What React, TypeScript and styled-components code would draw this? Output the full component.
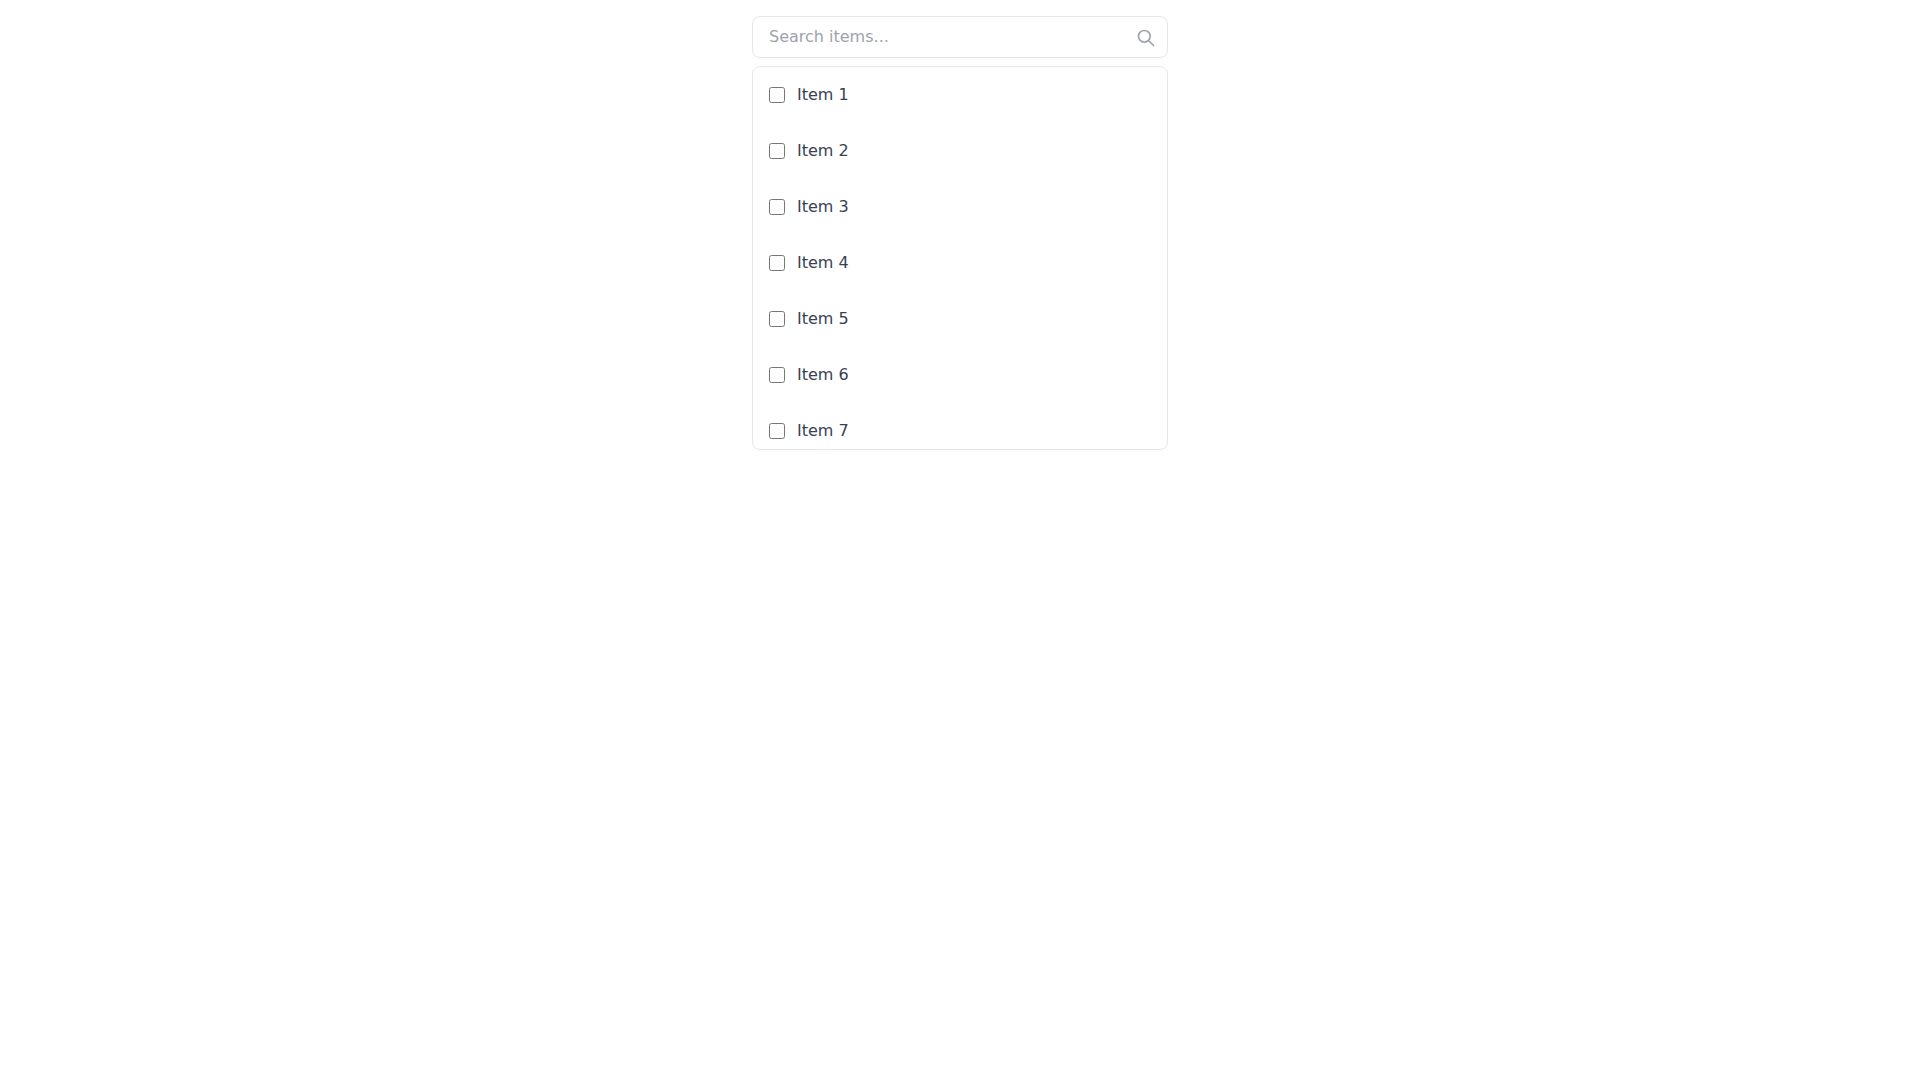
import React, { useState } from "react";
import styled, { createGlobalStyle } from "styled-components";

const GlobalStyle = createGlobalStyle`
  *, *::before, *::after {
    box-sizing: border-box;
  }

  body {
    margin: 0;
    background: #ffffff;
    color: #374151;
    font-family: "DejaVu Sans", sans-serif;
    font-size: 16px;
    line-height: 24px;
  }
`;

const Container = styled.main`
  display: flex;
  flex-direction: column;
  gap: 8px;
  max-width: 448px;
  margin: 0 auto;
  padding: 16px;
`;

const SearchField = styled.div`
  position: relative;
  display: flex;
`;

const SearchInput = styled.input`
  width: 100%;
  padding: 8px 40px 8px 16px;
  border: 1px solid #e5e7eb;
  border-radius: 8px;
  background: #ffffff;
  color: inherit;
  font: inherit;

  &::placeholder {
    color: #9ca3af;
    opacity: 1;
  }

  &:focus {
    outline: none;
    border-color: #3b82f6;
  }
`;

const SearchIcon = styled.svg`
  position: absolute;
  top: 12px;
  right: 12px;
  width: 20px;
  height: 20px;
  color: #9ca3af;
  pointer-events: none;
`;

const List = styled.ul`
  max-height: 384px;
  margin: 0;
  padding: 0;
  overflow-y: auto;
  list-style: none;
  border: 1px solid #e5e7eb;
  border-radius: 8px;
  scrollbar-width: none;
`;

const Row = styled.label`
  display: flex;
  align-items: center;
  gap: 12px;
  padding: 16px;
  cursor: pointer;

  &:hover {
    background: #f9fafb;
  }
`;

const Checkbox = styled.input`
  width: 16px;
  height: 16px;
  margin: 0;
`;

const items = Array.from({ length: 20 }, (_, i) => `Item ${i + 1}`);

export default function App() {
  const [query, setQuery] = useState("");
  const visible = items.filter((item) =>
    item.toLowerCase().includes(query.toLowerCase())
  );

  return (
    <>
      <GlobalStyle />
      <Container>
        <SearchField>
          <SearchInput
            type="text"
            aria-label="Search items"
            placeholder="Search items..."
            value={query}
            onChange={(e) => setQuery(e.target.value)}
          />
          <SearchIcon
            viewBox="0 0 24 24"
            fill="none"
            stroke="currentColor"
            strokeWidth={2}
            strokeLinecap="round"
            strokeLinejoin="round"
            aria-hidden="true"
          >
            <path d="M21 21l-6-6m2-5a7 7 0 11-14 0 7 7 0 0114 0z" />
          </SearchIcon>
        </SearchField>
        <List>
          {visible.map((item) => (
            <li key={item}>
              <Row>
                <Checkbox type="checkbox" />
                <span>{item}</span>
              </Row>
            </li>
          ))}
        </List>
      </Container>
    </>
  );
}
